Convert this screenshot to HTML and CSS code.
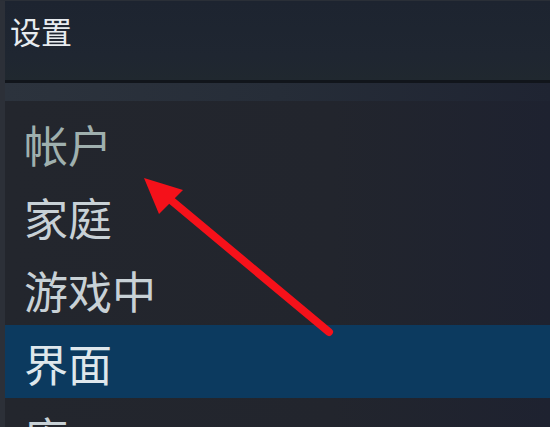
FILE: index.html
```html
<!DOCTYPE html>
<html lang="zh-CN">
<head>
    <meta charset="UTF-8">
    <meta name="viewport" content="width=device-width, initial-scale=1.0">
    <title>设置</title>
    <link rel="stylesheet" href="styles.css">
</head>
<body>
    <div class="window">
        <header class="title-bar">
            <h1 class="title">设置</h1>
        </header>

        <div class="divider"></div>

        <ul class="menu">
            <li class="item item-dim">帐户</li>
            <li class="item">家庭</li>
            <li class="item">游戏中</li>
            <li class="item active">界面</li>
            <li class="item">库</li>
        </ul>

        <!-- pointer drawn over the menu -->
        <svg class="pointer" width="550" height="427" viewBox="0 0 550 427">
            <line x1="329" y1="332" x2="166" y2="196" stroke="#f5111a" stroke-width="8" stroke-linecap="round"/>
            <polygon points="144,178 183,190 159,214" fill="#f5111a"/>
        </svg>
    </div>
</body>
</html>
```

FILE: styles.css
```css
:root {
    --bg-top: #1e2530;
    --bg-list: #23262d;
    --selected: #0c3a5f;
    --text: #c8d1d6;
    --text-dim: #9fb0ae;
}
* {box-sizing: border-box; margin: 0; padding: 0;}
html, body {height: 100%;}
body {
    background: var(--bg-top);
    font-family: "Noto Sans CJK SC", "Noto Sans", sans-serif;
    overflow: hidden;
}

.window {
    position: relative;
    height: 100%;
    display: flex;
    flex-direction: column;
    border-left: 5px solid #2c3038;
    border-top: 1px solid #2a2f37;
    background: var(--bg-top);
    overflow: hidden;
}

.title-bar {
    flex: none;
    height: 79px;
    padding: 14px 0 0 5px;
    background: linear-gradient(180deg, #1d2430 0%, #1f2631 70%, #20282f 100%);
}
.title {
    font-size: 31px;
    font-weight: 400;
    line-height: 1;
    color: #e7ebef;
}

.divider {
    flex: none;
    height: 21px;
    border-top: 3px solid #11151b;
    background: linear-gradient(90deg, #2c333d 0%, #262d38 50%, #1f2432 100%);
}

.menu {
    flex: 1;
    min-height: 0;
    list-style: none;
    padding-top: 5px;
    background: linear-gradient(90deg, #23262d 0%, #22252d 60%, #1e2230 100%);
}
.item {
    height: 73px;
    line-height: 73px;
    padding: 2px 0 0 19px;
    font-size: 44px;
    color: var(--text);
}
.item-dim {color: var(--text-dim);}
.active {
    background: var(--selected);
    color: #dfe7ec;
}

.pointer {
    position: absolute;
    top: -1px;
    left: -5px;
    pointer-events: none;
}
```
